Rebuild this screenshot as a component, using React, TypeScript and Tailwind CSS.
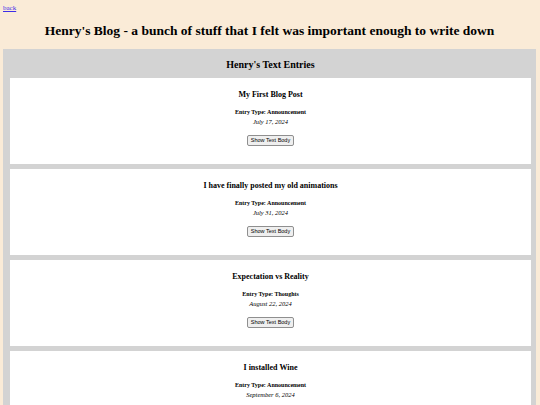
const entries = [
  { title: 'My First Blog Post', type: 'Announcement', date: 'July 17, 2024' },
  { title: 'I have finally posted my old animations', type: 'Announcement', date: 'July 31, 2024' },
  { title: 'Expectation vs Reality', type: 'Thoughts', date: 'August 22, 2024' },
  { title: 'I installed Wine', type: 'Announcement', date: 'September 6, 2024' },
]

function Entry({ title, type, date }: { title: string; type: string; date: string }) {
  return (
    <div className="bg-white text-center text-black h-[86px] flex flex-col items-center pt-[12px]">
      <h3 className="text-[8px] font-bold leading-[10px]">{title}</h3>
      <p className="mt-[8px] text-[6px] font-bold leading-[8px]">Entry Type: {type}</p>
      <p className="mt-[2px] text-[6.5px] italic leading-[8px]">{date}</p>
      <button className="mt-[9px] h-[10.5px] px-[3px] text-[5.5px] leading-none font-['Liberation_Sans',Arial,sans-serif] bg-[#efefef] border border-[#8f8f8f] rounded-[2px]">
        Show Text Body
      </button>
    </div>
  )
}

export default function App() {
  return (
    <div className="min-h-[405px] bg-[#faebd7] font-['Liberation_Serif','Times_New_Roman',serif] pl-[3px] pr-[4px] pt-[3px]">
      <a href="#" className="block w-fit text-[7px] leading-[10px] text-[#3d2ee8] underline">
        back
      </a>
      <h1 className="mt-[9.5px] text-center text-[13.5px] font-bold leading-[16px] text-black">
        Henry's Blog - a bunch of stuff that I felt was important enough to write down
      </h1>
      <main className="mt-[10.5px] bg-[#d3d3d3] pl-[7px] pr-[5px] pb-[5px]">
        <h2 className="text-center text-[10px] font-bold leading-[14px] pt-[8.5px] pb-[6.5px] text-black">
          Henry's Text Entries
        </h2>
        <div className="flex flex-col gap-[5px]">
          {entries.map((e) => (
            <Entry key={e.title} {...e} />
          ))}
        </div>
      </main>
    </div>
  )
}
